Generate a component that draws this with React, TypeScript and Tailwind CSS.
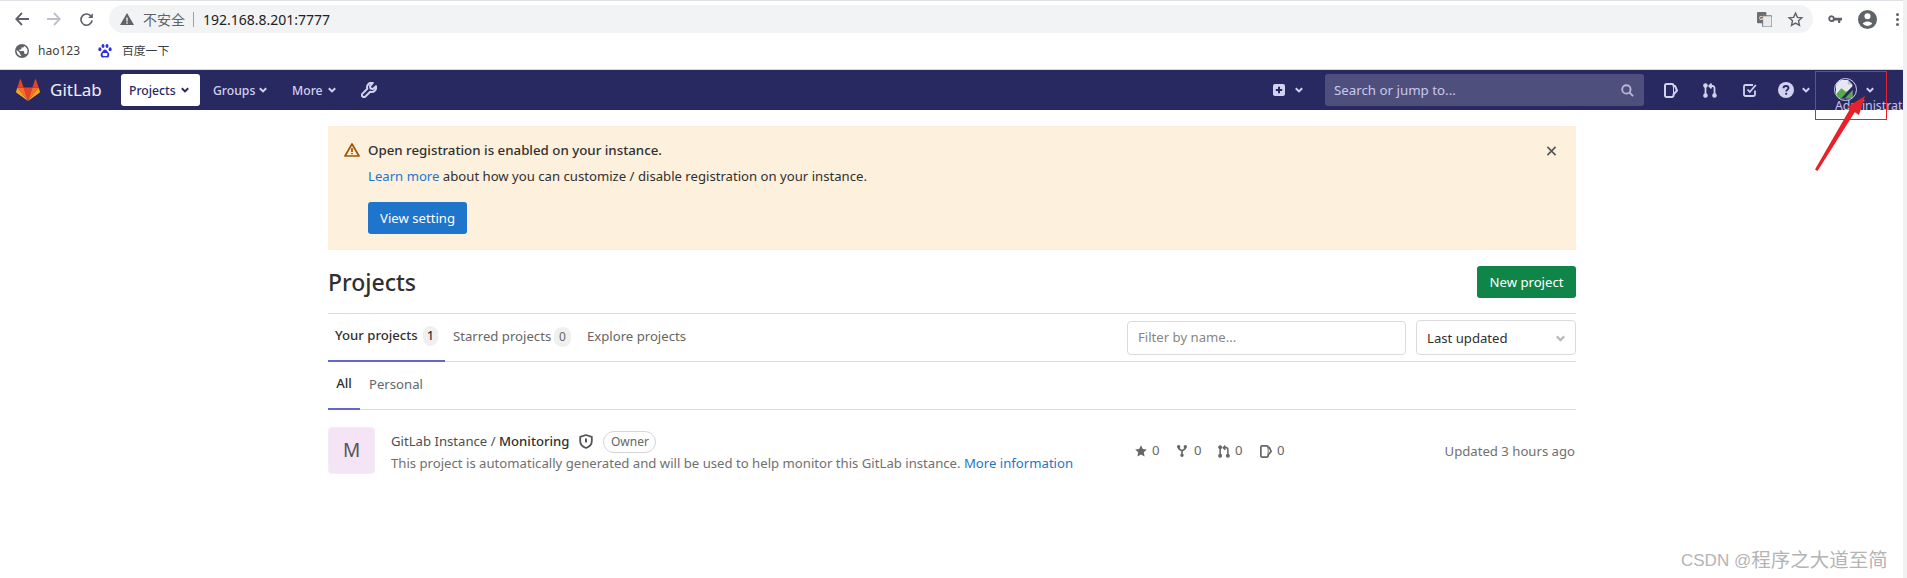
import React from "react";

const Chevron = ({ className = "" }: { className?: string }) => (
  <svg viewBox="0 0 8 6" className={`w-[8px] h-[6px] shrink-0 ${className}`} fill="none" stroke="currentColor" strokeWidth="2">
    <path d="M0.8 1.2 4 4.4 7.2 1.2" />
  </svg>
);

const Issue = ({ className = "" }: { className?: string }) => (
  <svg viewBox="0 0 14 15" className={className} fill="none" stroke="currentColor" strokeWidth="2" strokeLinejoin="round">
    <path d="M2.5 1h5.5a1.5 1.5 0 0 1 1.5 1.5V3H11l2 4.5-3.5 4V12.500A1.5 1.5 0 0 1 8 14H2.5A1.5 1.5 0 0 1 1 12.500v-10A1.5 1.5 0 0 1 2.5 1z" />
    <path d="M9.5 3v8" strokeWidth="1" />
  </svg>
);

const MergeIcon = ({ className = "" }: { className?: string }) => (
  <svg viewBox="0 0 14 15" className={className} fill="none" stroke="currentColor" strokeWidth="1.8">
    <circle cx="2.5" cy="2.5" r="1.4" fill="currentColor" />
    <circle cx="2.5" cy="12.5" r="1.4" fill="currentColor" />
    <circle cx="11.5" cy="12.5" r="1.4" fill="currentColor" />
    <path d="M2.5 3v9" />
    <path d="M11.5 12V5a2 2 0 0 0-2-2H7" />
    <path d="M8.6 0.6 6.2 3l2.4 2.4" />
  </svg>
);

const Tanuki = () => (
  <svg viewBox="0 0 24 22" className="w-[24px] h-[22px] shrink-0">
    <path d="M12 22 16.4 8.4H7.6z" fill="#e24329" />
    <path d="M12 22 7.6 8.4H1.4z" fill="#fc6d26" />
    <path d="M1.4 8.4 0.1 12.6c-.1.4 0 .8.4 1.1L12 22z" fill="#fca326" />
    <path d="M1.4 8.4h6.2L4.9.5c-.1-.4-.7-.4-.9 0z" fill="#e24329" />
    <path d="M12 22 16.4 8.4h6.2z" fill="#fc6d26" />
    <path d="M22.6 8.4l1.3 4.2c.1.4 0 .8-.4 1.1L12 22z" fill="#fca326" />
    <path d="M22.6 8.4h-6.2L19.1.5c.1-.4.7-.4.9 0z" fill="#e24329" />
  </svg>
);

const Paw = () => (
  <svg viewBox="0 0 14 14" className="w-[14px] h-[14px] shrink-0" fill="#2932e1">
    <ellipse cx="1.9" cy="5.2" rx="1.5" ry="2" />
    <ellipse cx="5" cy="2" rx="1.5" ry="2" />
    <ellipse cx="9" cy="2" rx="1.5" ry="2" />
    <ellipse cx="12.1" cy="5.2" rx="1.5" ry="2" />
    <path d="M7 5.4c-1.6 0-2 1.8-3.4 3C2.2 9.6 2.2 13.6 5 13.6c1 0 1.3-.3 2-.3s1 .3 2 .3c2.8 0 2.8-4 1.4-5.2C9 7.2 8.6 5.4 7 5.4z" />
    <rect x="4.6" y="9" width="4.8" height="3" rx="1" fill="#fff" />
  </svg>
);

const tabBadge = "ml-[4px] w-[15px] h-[20px] rounded-[8px] bg-[#f0f0f0] flex items-center justify-center text-[12px]";

export default function App() {
  return (
    <div
      className="w-[1907px] h-[578px] overflow-hidden relative flex bg-white text-[#303030] text-[13.15px]"
      style={{ fontFamily: '"Noto Sans", "Noto Sans CJK SC", sans-serif' }}
    >
      <div className="w-[1903px] shrink-0 flex flex-col">
        {/* browser chrome */}
        <div className="h-[1px] bg-[#dee1e6]" />
        <div className="h-[32px] pt-[4px] flex items-center text-[#5f6368]">
          <div className="h-[28px] w-full flex items-center">
            <svg viewBox="0 0 14 14" className="w-[14px] h-[14px] ml-[15px] shrink-0" fill="none" stroke="#5f6368" strokeWidth="1.8">
              <path d="M14 7H1.5M7 1 1.2 7 7 13" />
            </svg>
            <svg viewBox="0 0 14 14" className="w-[14px] h-[14px] ml-[18px] shrink-0" fill="none" stroke="#bdc1c6" strokeWidth="1.8">
              <path d="M0 7h12.5M7 1l5.8 6L7 13" />
            </svg>
            <svg viewBox="0 0 16 16" className="w-[15px] h-[15px] ml-[18px] shrink-0" fill="none" stroke="#5f6368" strokeWidth="1.8">
              <path d="M13.2 5A6 6 0 1 0 14 9" />
              <path d="M14.8 1.2v5.2H9.6z" fill="#5f6368" stroke="none" />
            </svg>
            <div className="ml-[15px] w-[1704px] h-[28px] rounded-full bg-[#f1f3f4] flex items-center shrink-0">
              <svg viewBox="0 0 14 12" className="w-[14px] h-[12px] ml-[11px] shrink-0" fill="#5f6368">
                <path d="M7 0 14 12H0zM6.3 4.5v4h1.4v-4zM6.3 9.3v1.4h1.4V9.3z" fillRule="evenodd" />
              </svg>
              <span className="ml-[9px] w-[42px] text-[14px] whitespace-nowrap text-[#5f6368]">不安全</span>
              <span className="ml-[8px] w-[1px] h-[15px] bg-[#9aa0a6]" />
              <span className="ml-[9px] text-[14px] text-[#202124]">192.168.8.201:7777</span>
              <svg viewBox="0 0 16 16" className="w-[15px] h-[15px] ml-auto shrink-0">
                <rect x="0" y="0" width="10" height="12" rx="1" fill="#6b6f74" />
                <rect x="6" y="4" width="10" height="12" rx="1" fill="#e8eaed" stroke="#6b6f74" />
                <text x="2" y="8" fontSize="6" fill="#fff">G</text>
              </svg>
              <svg viewBox="0 0 24 24" className="w-[17px] h-[17px] ml-[15px] mr-[9px] shrink-0" fill="none" stroke="#5f6368" strokeWidth="2">
                <path d="M12 3l2.7 6 6.3.6-4.8 4.2 1.4 6.4L12 17l-5.6 3.2 1.4-6.4L3 9.6 9.3 9z" />
              </svg>
            </div>
            <svg viewBox="0 0 16 10" className="w-[14px] h-[9px] ml-[15px] shrink-0" fill="#5f6368">
              <path d="M4 0a4 4 0 0 1 3.8 3H16v3h-2v3h-2.5V6H7.8A4 4 0 1 1 4 0zm0 2.4a1.6 1.6 0 1 0 0 3.2 1.6 1.6 0 0 0 0-3.2z" fillRule="evenodd" />
            </svg>
            <svg viewBox="0 0 20 20" className="w-[19px] h-[19px] ml-[16px] shrink-0" fill="#5f6368">
              <path d="M10 0a10 10 0 1 1 0 20 10 10 0 0 1 0-20zm0 3.4a3.2 3.2 0 1 0 0 6.4 3.2 3.2 0 0 0 0-6.4zM10 12c-2.4 0-4.8 1.1-5 2.6a6.8 6.8 0 0 0 10 0C14.8 13.100 12.400 12 10 12z" fillRule="evenodd" />
            </svg>
            <div className="ml-[19px] flex flex-col gap-[2px] shrink-0">
              <span className="w-[3px] h-[3px] rounded-full bg-[#5f6368]" />
              <span className="w-[3px] h-[3px] rounded-full bg-[#5f6368]" />
              <span className="w-[3px] h-[3px] rounded-full bg-[#5f6368]" />
            </div>
          </div>
        </div>
        <div className="h-[36px] flex items-center text-[12px] text-[#3c4043]">
          <svg viewBox="0 0 14 14" className="w-[14px] h-[14px] ml-[15px] shrink-0" fill="#5f6368">
            <path d="M7 0a7 7 0 1 1 0 14A7 7 0 0 1 7 0zM1.6 7c0 2.6 2 4.800 4.500 5.300V10.800c-.8 0-1.300-.6-1.300-1.300V8.800L1.700 5.900C1.600 6.300 1.600 6.600 1.600 7zm9.600 3.200c.8-.8 1.300-2 1.300-3.200 0-2.300-1.500-4.200-3.500-5v.3c0 .7-.6 1.300-1.300 1.300H6.400v1.300c0 .4-.3.7-.7.7H4.400V7h4.100c.4 0 .7.300.7.700v2h.7c.6 0 1.100.2 1.300.5z" fillRule="evenodd" />
          </svg>
          <span className="ml-[9px] w-[44px]">hao123</span>
          <span className="ml-[16px]"><Paw /></span>
          <span className="ml-[10px] text-[11.8px]">百度一下</span>
        </div>
        <div className="h-[1px] bg-[#d9d9d9]" />

        {/* gitlab nav */}
        <nav className="h-[40px] bg-[#292961] flex items-center text-[#d1d1f0] font-medium text-[12.2px] shrink-0 relative">
          <span className="ml-[16px]"><Tanuki /></span>
          <span className="ml-[10px] w-[60px] text-[17px] font-normal text-[#f0f0f8]">GitLab</span>
          <div className="ml-[11px] w-[79px] h-[32px] rounded-[3px] bg-white text-[#292961] flex items-center pl-[8px]">
            <span className="w-[52px] pt-[2px]">Projects</span>
            <Chevron />
          </div>
          <div className="ml-[13px] flex items-center">
            <span className="w-[46px] pt-[2px]">Groups</span>
            <Chevron />
          </div>
          <div className="ml-[25px] flex items-center">
            <span className="w-[36px] pt-[2px]">More</span>
            <Chevron />
          </div>
          <svg viewBox="0 0 16 16" className="w-[16px] h-[16px] ml-[25px] shrink-0" fill="none" stroke="#d1d1f0" strokeWidth="2">
            <path d="M15 4.200 12 7 9.500 6.500 9 4l2.800-3A4.500 4.500 0 0 0 6.300 6.800L1.500 11.600a2 2 0 0 0 2.900 2.900l4.800-4.800A4.500 4.500 0 0 0 15 4.200z" strokeLinejoin="round" />
          </svg>

          <div className="ml-auto flex items-center">
            <svg viewBox="0 0 12 12" className="w-[12px] h-[12px] shrink-0">
              <rect width="12" height="12" rx="2" fill="#d1d1f0" />
              <path d="M6 2.800v6.400M2.800 6h6.400" stroke="#292961" strokeWidth="2" />
            </svg>
            <Chevron className="ml-[10px]" />
            <div className="ml-[22px] w-[319px] h-[32px] rounded-[3px] bg-[#4f4f7e] flex items-center pl-[9px] pr-[10px] font-normal text-[13.3px] text-[#c9c9e8]">
              <span className="pt-[1px]">Search or jump to...</span>
              <svg viewBox="0 0 14 14" className="w-[13px] h-[13px] ml-auto shrink-0" fill="none" stroke="#b8b8da" strokeWidth="2">
                <circle cx="5.800" cy="5.800" r="4.500" />
                <path d="M9 9l4 4" />
              </svg>
            </div>
            <Issue className="w-[14px] h-[15px] ml-[20px] shrink-0" />
            <MergeIcon className="w-[14px] h-[15px] ml-[25px] shrink-0" />
            <svg viewBox="0 0 14 14" className="w-[14px] h-[14px] ml-[26px] shrink-0" fill="none" stroke="#d1d1f0" strokeWidth="1.800">
              <path d="M12 7.500V11.500a1.500 1.500 0 0 1-1.500 1.500h-8A1.500 1.500 0 0 1 1 11.500v-8A1.500 1.500 0 0 1 2.500 2H10" />
              <path d="M4.500 6.500 6.800 9 12.800 2" />
            </svg>
            <svg viewBox="0 0 16 16" className="w-[16px] h-[16px] ml-[21px] shrink-0">
              <circle cx="8" cy="8" r="8" fill="#d1d1f0" />
              <path d="M5.500 6.200C5.500 4.800 6.600 4 8 4s2.500.9 2.500 2.100c0 1.800-2.300 1.700-2.300 3.400" fill="none" stroke="#292961" strokeWidth="1.800" />
              <circle cx="8.200" cy="11.800" r="1.100" fill="#292961" />
            </svg>
            <Chevron className="ml-[8px]" />
            <div className="ml-[24px] w-[23px] h-[23px] rounded-full border border-[#d1d1f0] overflow-hidden relative shrink-0 bg-[#292961] -mt-[1px]">
              <svg viewBox="0 0 23 23" className="w-full h-full">
                <path d="M1 1h13l5 5v15H1z" fill="#e6e8f0" />
                <path d="M14 1v5h5z" fill="#b9c2d6" />
                <path d="M1 17l6-7 5 4 7-4v11H1z" fill="#5ba84a" />
                <path d="M7 21 19 8l2 2-10 11z" fill="#292961" />
              </svg>
            </div>
            <Chevron className="ml-[9px] mr-[29px]" />
          </div>
          <span className="absolute left-[1835px] top-[30px] w-[68px] h-[12px] overflow-hidden whitespace-nowrap font-normal text-[12.3px] leading-[12px] text-[#c3c3ec]">
            Administrator
          </span>
        </nav>

        {/* content */}
        <main className="w-[1248px] ml-[328px] mt-[16px] flex flex-col">
          <div className="h-[124px] bg-[#fdf0dd] relative pl-[16px]">
            <div className="flex items-center h-[20px] mt-[15px]">
              <svg viewBox="0 0 16 14" className="w-[16px] h-[14px] shrink-0 -mt-[2px]" fill="none" stroke="#a35200" strokeWidth="1.700" strokeLinejoin="round">
                <path d="M8 1 15 13H1z" />
                <path d="M8 5v4M8 10v1.200" />
              </svg>
              <span className="ml-[8px] font-medium text-[13.300px] text-[#303030] whitespace-nowrap">
                Open registration is enabled on your instance.
              </span>
            </div>
            <div className="ml-[24px] mt-[5px] h-[20px] leading-[20px] text-[#303030] whitespace-nowrap">
              <span className="text-[#1f75cb]">Learn more</span> about how you can customize / disable registration on your instance.
            </div>
            <div className="ml-[24px] mt-[16px] w-[99px] h-[32px] pt-[1px] rounded-[3px] bg-[#1f75cb] text-white flex items-center justify-center">
              View setting
            </div>
            <svg viewBox="0 0 11 11" className="absolute left-[1218px] top-[20px] w-[11px] h-[10px]" fill="none" stroke="#555" strokeWidth="1.800">
              <path d="M1 1l9 9M10 1l-9 9" />
            </svg>
          </div>

          <div className="h-[63px] flex justify-between pt-[16px]">
            <h1 className="text-[23px] leading-[32px] font-medium text-[#303030]">Projects</h1>
            <div className="w-[99px] h-[32px] pt-[1px] rounded-[3px] bg-[#108548] text-white flex items-center justify-center">
              New project
            </div>
          </div>

          <div className="h-[49px] border-y border-[#dbdbdb] flex items-stretch justify-between">
            <div className="flex pb-[2px]">
              <div className="w-[117px] -mb-[3px] border-b-[2px] border-[#6666c4] flex items-center pl-[7px] pb-[2px] font-medium text-[#303030]">
                <span className="w-[84px] whitespace-nowrap">Your projects</span>
                <span className={tabBadge}>1</span>
              </div>
              <div className="w-[126px] flex items-center pl-[8px] text-[#666]">
                <span className="w-[97px] whitespace-nowrap">Starred projects</span>
                <span className={`${tabBadge} w-[17px]`}>0</span>
              </div>
              <div className="flex items-center pl-[16px] text-[#666] whitespace-nowrap">Explore projects</div>
            </div>
            <div className="flex items-center">
              <div className="w-[279px] h-[34px] pt-[1px] rounded-[4px] border border-[#dbdbdb] flex items-center pl-[10px] text-[#868686]">
                Filter by name...
              </div>
              <div className="ml-[10px] w-[160px] h-[35px] pt-[2px] rounded-[4px] border border-[#dbdbdb] flex items-center pl-[10px] text-[#303030]">
                Last updated
                <Chevron className="ml-auto mr-[9px] w-[11px] h-[7px] text-[#bbb]" />
              </div>
            </div>
          </div>

          <div className="h-[48px] border-b border-[#dbdbdb] flex">
            <div className="w-[32px] -mb-[1px] border-b-[2px] border-[#6666c4] pb-[2px] flex items-center justify-center font-medium">All</div>
            <div className="flex items-center pl-[9px] pb-[2px] text-[#666]">Personal</div>
          </div>

          <div className="flex pt-[17px]">
            <div className="w-[47px] h-[47px] rounded-[4px] bg-[#f4e4f5] border border-[#f2ecf4] flex items-center justify-center text-[19px] text-[#555] shrink-0">
              M
            </div>
            <div className="w-[744px] ml-[16px] shrink-0">
              <div className="flex items-center h-[25px] mt-[2px]">
                <span className="text-[#4f4f4f] whitespace-nowrap">
                  GitLab Instance / <span className="font-medium text-[#303030]">Monitoring</span>
                </span>
                <svg viewBox="0 0 14 15" className="w-[14px] h-[15px] ml-[10px] shrink-0" fill="none" stroke="#555" strokeWidth="1.800" strokeLinejoin="round">
                  <path d="M7 1l5.800 1.800V7c0 3.500-2.500 5.800-5.800 7C3.700 12.800 1.200 10.500 1.200 7V2.800z" />
                  <path d="M7 4.500v4" strokeWidth="2" />
                </svg>
                <span className="ml-[10px] w-[53px] h-[22px] rounded-full border border-[#d5d5d5] flex items-center justify-center text-[12px] text-[#666]">
                  Owner
                </span>
              </div>
              <div className="text-[#707070] leading-[18px] whitespace-nowrap">
                This project is automatically generated and will be used to help monitor this GitLab instance.{" "}
                <span className="text-[#1f75cb]">More information</span>
              </div>
            </div>
            <div className="flex items-center h-[48px] text-[#666] ml-[3px]">
              <svg viewBox="0 0 12 12" className="w-[12px] h-[12px] ml-[-3px] shrink-0" fill="#666">
                <path d="M6 .3l1.800 3.700 4 .5-3 2.800.8 4.100L6 9.400l-3.600 2 .8-4.100-3-2.800 4-.5z" />
              </svg>
              <span className="ml-[5px] w-[7px]">0</span>
              <svg viewBox="0 0 10 12" className="w-[10px] h-[12px] ml-[18px] shrink-0" fill="none" stroke="#666" strokeWidth="1.600">
                <circle cx="1.700" cy="1.700" r=".9" fill="#666" />
                <circle cx="8.300" cy="1.700" r=".9" fill="#666" />
                <circle cx="5" cy="10.300" r=".9" fill="#666" />
                <path d="M1.700 2v1.500L5 6l3.300-2.500V2M5 6v4" />
              </svg>
              <span className="ml-[7px] w-[7px]">0</span>
              <MergeIcon className="w-[12px] h-[13px] ml-[17px] shrink-0 text-[#666]" />
              <span className="ml-[5px] w-[7px]">0</span>
              <Issue className="w-[12px] h-[13px] ml-[18px] shrink-0 text-[#666]" />
              <span className="ml-[5px] w-[7px]">0</span>
            </div>
            <div className="ml-auto h-[48px] pt-[2px] pr-[1px] flex items-center text-[#707070] whitespace-nowrap">Updated 3 hours ago</div>
          </div>
        </main>
      </div>
      <div className="w-[4px] bg-[#f1f1f1]" />

      {/* annotation overlays */}
      <div className="absolute left-[1815px] top-[71px] w-[72px] h-[49px] border border-[#e62129]" />
      <svg className="absolute left-[1810px] top-[90px] w-[60px] h-[85px]" viewBox="0 0 60 85">
        <path d="M5 79.500 7.500 81 45.500 21 40.500 18z" fill="#e62129" />
        <path d="M55 6 37 17 49 25z" fill="#e62129" />
      </svg>
      <div className="absolute left-[1681px] top-[549px] h-[24px] flex items-center whitespace-nowrap text-[#b4b4b4]" style={{ fontFamily: '"Liberation Sans", "Noto Sans CJK SC", sans-serif' }}>
        <span className="text-[17px]">CSDN @</span>
        <span className="text-[19.5px]">程序之大道至简</span>
      </div>
    </div>
  );
}
